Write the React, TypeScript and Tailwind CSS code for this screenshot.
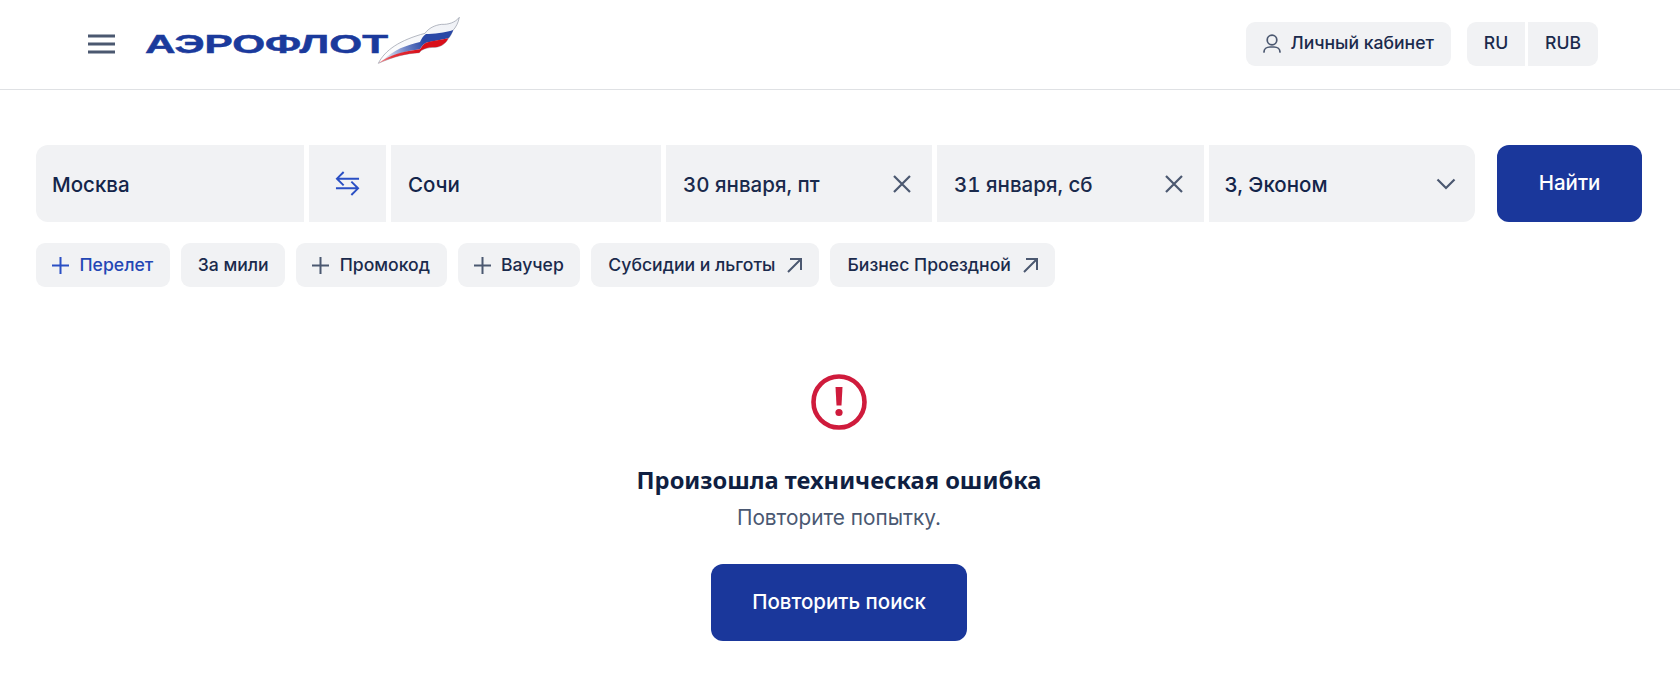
import React from 'react';

const Logo = () => (
  <svg width="318" height="60" viewBox="0 0 318 60" className="shrink-0">
    <defs>
      <linearGradient id="whiteFade" x1="0" y1="1" x2="1" y2="0">
        <stop offset="0" stopColor="#ffffff" />
        <stop offset="1" stopColor="#eef0f5" />
      </linearGradient>
      <linearGradient id="redFade" x1="25" y1="160" x2="150" y2="118" gradientUnits="userSpaceOnUse">
        <stop offset="0" stopColor="#f19aa0" />
        <stop offset="0.35" stopColor="#e4353c" />
        <stop offset="1" stopColor="#d80f1a" />
      </linearGradient>
      <linearGradient id="blueFade" x1="50" y1="130" x2="160" y2="90" gradientUnits="userSpaceOnUse">
        <stop offset="0" stopColor="#d5dbee" />
        <stop offset="0.5" stopColor="#6f84c6" />
        <stop offset="1" stopColor="#2a48a6" />
      </linearGradient>
    </defs>
    <text
      x="0"
      y="43"
      fontFamily="'Liberation Sans', sans-serif"
      fontWeight="700"
      fontSize="26.5"
      fill="#1b3a9c"
      stroke="#1b3a9c"
      strokeWidth="0.5"
      textLength="243"
      lengthAdjust="spacingAndGlyphs"
    >
      АЭРОФЛОТ
    </text>
    <g transform="translate(225 0) scale(0.3333)">
      <path
        d="M25 160 C45 120 90 90 165 70 C175 55 195 45 215 43 C235 44 255 38 268 22 C265 38 258 52 248 62 C244 74 240 80 235 85 C228 100 215 110 195 112 C170 112 155 118 148 128 C110 130 70 140 25 160 Z"
        fill="url(#whiteFade)"
        stroke="#8f96a3"
        strokeWidth="2"
      />
      <path
        d="M40 150 C70 120 110 105 150 96 C155 85 160 78 168 72 C190 72 225 68 250 60 C245 72 240 80 235 85 L168 98 C158 104 153 112 150 118 C110 122 70 135 40 150 Z"
        fill="url(#blueFade)"
      />
      <path
        d="M25 160 C60 135 95 125 150 118 C155 110 160 102 168 98 C190 92 215 90 235 85 C228 100 215 110 195 112 C170 112 155 118 148 128 C110 130 70 140 25 160 Z"
        fill="url(#redFade)"
      />
    </g>
  </svg>
);

const MenuIcon = () => (
  <svg width="27" height="20" viewBox="0 0 27 20" fill="none" stroke="#4b5870" strokeWidth="3" className="shrink-0">
    <path d="M0 2h27M0 10h27M0 18h27" />
  </svg>
);

const UserIcon = () => (
  <svg width="18" height="19" viewBox="0 0 18 19" fill="none" stroke="#4b5870" strokeWidth="1.7" strokeLinecap="round" className="shrink-0">
    <circle cx="9" cy="6" r="4.8" />
    <path d="M1 18c0-3 2.500-5 6-5h4c3.500 0 6 2 6 5" />
  </svg>
);

const SwapIcon = () => (
  <svg width="25" height="27" viewBox="0 0 26 28" fill="none" stroke="#2a4fc4" strokeWidth="2" className="shrink-0">
    <path d="M9 2 2 9l7 7M2 9h23M17 12l7 7-7 7M24 19H1" />
  </svg>
);

const CrossIcon = () => (
  <svg width="20" height="20" viewBox="0 0 20 20" fill="none" stroke="#4b5870" strokeWidth="2.2" className="shrink-0">
    <path d="M2 2l16 16M18 2 2 18" />
  </svg>
);

const ChevronIcon = () => (
  <svg width="20" height="12" viewBox="0 0 20 12" fill="none" stroke="#4b5870" strokeWidth="2.2" className="shrink-0">
    <path d="M1.500 1.500 10 10l8.500-8.500" />
  </svg>
);

const PlusIcon = ({ color }: { color: string }) => (
  <svg width="17" height="17" viewBox="0 0 17 17" fill="none" stroke={color} strokeWidth="2" className="shrink-0">
    <path d="M8.500 0v17M0 8.500h17" />
  </svg>
);

const ArrowIcon = () => (
  <svg width="15" height="15" viewBox="0 0 15 15" fill="none" stroke="#4b5870" strokeWidth="2" className="shrink-0">
    <path d="M1 14 14 1M3 1h11v11" />
  </svg>
);

const Chip = ({ label, plus, blue }: { label: string; plus?: boolean; blue?: boolean }) => (
  <div className={`flex h-[44px] items-center gap-[10.5px] rounded-[9px] bg-[#f1f2f4] pr-[16.5px] ${plus ? 'pl-[16px]' : 'pl-[17px]'}`}>
    {plus && <PlusIcon color={blue ? '#2a4fc4' : '#4b5870'} />}
    <span className={`pt-[1px] text-[17.6px] font-medium ${blue ? 'text-[#2347b5]' : 'text-[#1a2a4c]'}`}>{label}</span>
  </div>
);

const LinkChip = ({ label }: { label: string }) => (
  <div className="flex h-[44px] items-center gap-[12px] rounded-[9px] bg-[#f1f2f4] pl-[17px] pr-[17px]">
    <span className="pt-[1px] text-[17.6px] font-medium text-[#1a2a4c]">{label}</span>
    <ArrowIcon />
  </div>
);

const App = () => {
  return (
    <div className="h-[696px] overflow-hidden bg-white font-['Inter',sans-serif]">
      {/* Header */}
      <header className="flex h-[90px] items-center border-b border-[#dfe1e4] pb-[2px] pl-[88px] pr-[82px]">
        <MenuIcon />
        <div className="mb-[7px] ml-[30px]">
          <Logo />
        </div>
        <div className="ml-auto flex items-center">
          <div className="flex h-[44px] items-center gap-[9px] rounded-[9px] bg-[#f1f2f4] pl-[17px] pr-[17px]">
            <UserIcon />
            <span className="text-[17.6px] font-medium text-[#1a2a4c]">Личный кабинет</span>
          </div>
          <div className="ml-[16px] flex gap-[3px]">
            <div className="flex h-[44px] w-[58px] items-center justify-center rounded-l-[9px] bg-[#f1f2f4] text-[17.6px] font-medium text-[#1a2a4c]">RU</div>
            <div className="flex h-[44px] w-[70px] items-center justify-center rounded-r-[9px] bg-[#f1f2f4] text-[17.6px] font-medium text-[#1a2a4c]">RUB</div>
          </div>
        </div>
      </header>

      <main className="px-[36px]">
        {/* Search form */}
        <div className="mt-[55px] flex h-[77px] gap-[22px]">
          <div className="flex w-[1439px] gap-[5px]">
            <div className="flex w-[268px] items-center rounded-l-[12px] bg-[#f1f2f4] px-[16px] pt-[3px] text-[20.5px] font-medium text-[#14254a]">Москва</div>
            <div className="flex w-[77px] items-center justify-center bg-[#f1f2f4]">
              <SwapIcon />
            </div>
            <div className="flex w-[270px] items-center bg-[#f1f2f4] px-[17px] pt-[3px] text-[20.5px] font-medium text-[#14254a]">Сочи</div>
            <div className="flex w-[266px] items-center justify-between bg-[#f1f2f4] pl-[17px] pr-[20px] text-[20.5px] font-medium text-[#1a2a4c]">
              <span className="pt-[3px] tabular-nums">30 января, пт</span>
              <CrossIcon />
            </div>
            <div className="flex w-[266.5px] items-center justify-between bg-[#f1f2f4] pl-[17px] pr-[20px] text-[20.5px] font-medium text-[#1a2a4c]">
              <span className="pt-[3px] tabular-nums">31 января, сб</span>
              <CrossIcon />
            </div>
            <div className="flex w-[266.5px] items-center justify-between rounded-r-[12px] bg-[#f1f2f4] pl-[16px] pr-[19px] text-[20.5px] font-medium text-[#14254a]">
              <span className="pt-[3px]">3, Эконом</span>
              <ChevronIcon />
            </div>
          </div>
          <button className="w-[145px] rounded-[12px] bg-[#1a379b] text-[20.5px] font-medium text-white">Найти</button>
        </div>

        {/* Options */}
        <div className="mt-[21px] flex gap-[11px]">
          <Chip label="Перелет" plus blue />
          <Chip label="За мили" />
          <Chip label="Промокод" plus />
          <Chip label="Ваучер" plus />
          <LinkChip label="Субсидии и льготы" />
          <LinkChip label="Бизнес Проездной" />
        </div>

        {/* Error state */}
        <div className="mt-[86px] flex flex-col items-center pr-[2px]">
          <svg width="58" height="58" viewBox="0 0 58 58">
            <circle cx="29" cy="29" r="25.500" fill="none" stroke="#cf1b3c" strokeWidth="4.600" />
            <path d="M25.500 14h7l-1 18.500h-5z" fill="#cf1b3c" />
            <circle cx="29" cy="39.500" r="3.600" fill="#cf1b3c" />
          </svg>
          <h2 className="mt-[33px] font-['Noto_Sans',sans-serif] text-[23.7px] font-bold leading-[32px] text-[#0f1f42]">Произошла техническая ошибка</h2>
          <p className="mt-[8px] text-[20.8px] leading-[28px] text-[#4a5872]">Повторите попытку.</p>
          <button className="mt-[32px] h-[77px] w-[256px] rounded-[12px] bg-[#1a379b] text-[20.5px] font-medium text-white">Повторить поиск</button>
        </div>
      </main>
    </div>
  );
};

export default App;
